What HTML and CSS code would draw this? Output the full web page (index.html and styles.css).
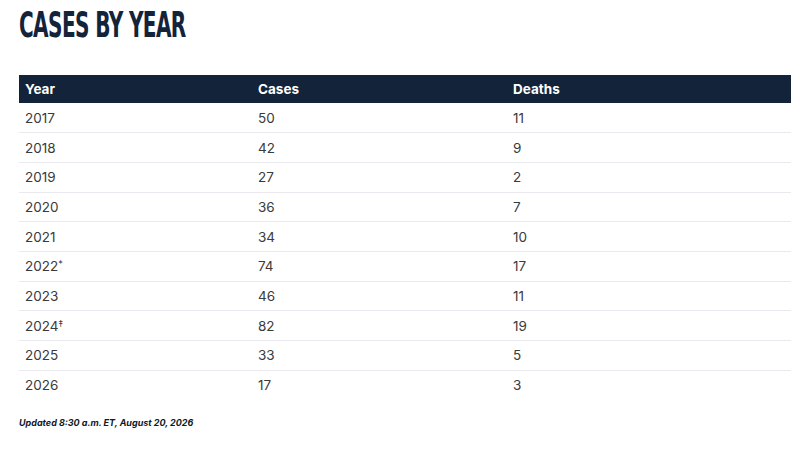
FILE: index.html
```html
<!DOCTYPE html>
<html>
<head>
<meta charset="utf-8">
<link rel="stylesheet" href="styles.css">
</head>
<body>
<div class="page">
  <h1 class="title">CASES BY YEAR</h1>
  <table class="data">
    <thead>
      <tr><th class="c1">Year</th><th class="c2">Cases</th><th class="c3">Deaths</th></tr>
    </thead>
    <tbody>
      <tr><td>2017</td><td>50</td><td>11</td></tr>
      <tr><td>2018</td><td>42</td><td>9</td></tr>
      <tr><td>2019</td><td>27</td><td>2</td></tr>
      <tr><td>2020</td><td>36</td><td>7</td></tr>
      <tr><td>2021</td><td>34</td><td>10</td></tr>
      <tr><td>2022<sup>*</sup></td><td>74</td><td>17</td></tr>
      <tr><td>2023</td><td>46</td><td>11</td></tr>
      <tr><td>2024<sup>‡</sup></td><td>82</td><td>19</td></tr>
      <tr><td>2025</td><td>33</td><td>5</td></tr>
      <tr><td>2026</td><td>17</td><td>3</td></tr>
    </tbody>
  </table>
  <p class="updated">Updated 8:30 a.m. ET, August 20, 2026</p>
</div>
</body>
</html>
```
FILE: styles.css
```css
html, body {
  margin: 0;
  background: #ffffff;
}
.page {
  padding: 0 9px 0 19px;
  font-family: "Inter", "DejaVu Sans", sans-serif;
}
.title {
  margin: 0;
  padding-top: 7px;
  height: 75px;
  box-sizing: border-box;
  font-family: "DejaVu Sans Condensed", "DejaVu Sans", sans-serif;
  font-weight: bold;
  font-size: 36px;
  line-height: 36px;
  color: #13233a;
  letter-spacing: -1px;
  transform: scaleX(0.62);
  transform-origin: left center;
  white-space: nowrap;
}
.data {
  width: 772px;
  border-collapse: collapse;
  font-size: 13.5px;
  color: #3a3a3a;
}
.data th {
  background: #13233a;
  color: #ffffff;
  text-align: left;
  font-weight: 700;
  height: 28px;
  padding: 0 6px;
  box-sizing: border-box;
}
.c1 { width: 233px; }
.c2 { width: 255px; }
.data td {
  height: 29.7px;
  padding: 0 6px;
  box-sizing: border-box;
  border-bottom: 1.5px solid #e9e9ef;
}
.data tr:last-child td {
  border-bottom: none;
}
.data sup {
  font-size: 9px;
  vertical-align: 4px;
  line-height: 0;
}
.updated {
  margin: 17px 0 0 0;
  font-size: 9px;
  font-weight: 700;
  font-style: italic;
  color: #111826;
}
```
